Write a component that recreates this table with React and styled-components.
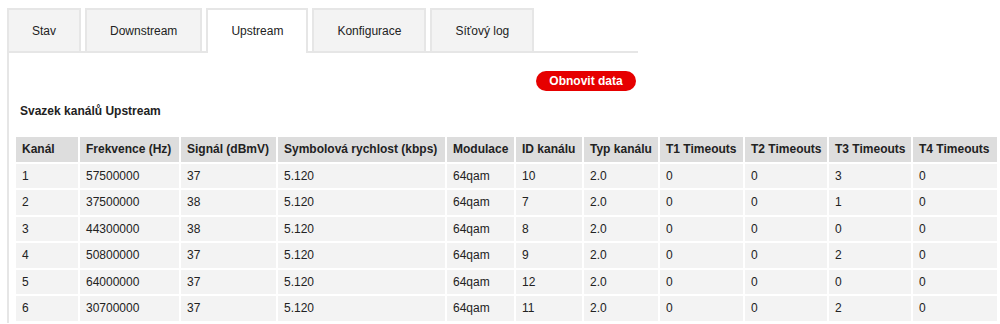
import React from "react";
import styled, { createGlobalStyle } from "styled-components";

const GlobalStyle = createGlobalStyle`
  body {
    margin: 0;
    background: #fff;
    font-family: "Liberation Sans", Arial, sans-serif;
    font-size: 12px;
    color: #222;
    overflow: hidden;
  }
`;

const tabs = ["Stav", "Downstream", "Upstream", "Konfigurace", "Síťový log"];

const columns = [
  { title: "Kanál", width: 62 },
  { title: "Frekvence (Hz)", width: 99 },
  { title: "Signál (dBmV)", width: 95 },
  { title: "Symbolová rychlost (kbps)", width: 167 },
  { title: "Modulace", width: 67 },
  { title: "ID kanálu", width: 66 },
  { title: "Typ kanálu", width: 74 },
  { title: "T1 Timeouts", width: 83 },
  { title: "T2 Timeouts", width: 82 },
  { title: "T3 Timeouts", width: 82 },
  { title: "T4 Timeouts", width: 84 },
];

const rows = [
  ["1", "57500000", "37", "5.120", "64qam", "10", "2.0", "0", "0", "3", "0"],
  ["2", "37500000", "38", "5.120", "64qam", "7", "2.0", "0", "0", "1", "0"],
  ["3", "44300000", "38", "5.120", "64qam", "8", "2.0", "0", "0", "0", "0"],
  ["4", "50800000", "37", "5.120", "64qam", "9", "2.0", "0", "0", "2", "0"],
  ["5", "64000000", "37", "5.120", "64qam", "12", "2.0", "0", "0", "0", "0"],
  ["6", "30700000", "37", "5.120", "64qam", "11", "2.0", "0", "0", "2", "0"],
];

function App() {
  const [active, setActive] = React.useState("Upstream");

  return (
    <Page>
      <GlobalStyle />
      <TabBar>
        {tabs.map((t) => (
          <Tab key={t} $active={t === active} onClick={() => setActive(t)}>
            {t}
          </Tab>
        ))}
      </TabBar>
      <Panel>
        <ButtonRow>
          <RefreshButton>Obnovit data</RefreshButton>
        </ButtonRow>
        <Title>Svazek kanálů Upstream</Title>
        <Table>
          <colgroup>
            {columns.map((c) => (
              <col key={c.title} style={{ width: c.width }} />
            ))}
          </colgroup>
          <thead>
            <tr>
              {columns.map((c) => (
                <Th key={c.title}>{c.title}</Th>
              ))}
            </tr>
          </thead>
          <tbody>
            {rows.map((r) => (
              <tr key={r[0]}>
                {r.map((v, i) => (
                  <Td key={i}>{v}</Td>
                ))}
              </tr>
            ))}
          </tbody>
        </Table>
      </Panel>
    </Page>
  );
}

const Page = styled.div`
  padding: 8px 0 0 7px;
`;

const TabBar = styled.div`
  display: flex;
  align-items: flex-start;
  gap: 4px;
  height: 43px;
`;

const Tab = styled.div`
  position: relative;
  z-index: 1;
  box-sizing: border-box;
  display: flex;
  align-items: center;
  justify-content: center;
  height: ${(p) => (p.$active ? "45px" : "43px")};
  padding: ${(p) => (p.$active ? "0 23px 2px" : "0 23px")};
  background: ${(p) => (p.$active ? "#fff" : "#f3f3f3")};
  border: 2px solid #e6e6e6;
  border-bottom: none;
  font-size: 12px;
  color: #222;
  cursor: pointer;
`;

const Panel = styled.div`
  box-sizing: border-box;
  width: 631px;
  min-height: 271px;
  border-top: 2px solid #e6e6e6;
  border-left: 2px solid #e6e6e6;
`;

const ButtonRow = styled.div`
  display: flex;
  justify-content: flex-end;
  padding: 18px 2px 0 0;
`;

const RefreshButton = styled.button`
  width: 100px;
  height: 20px;
  padding: 0;
  border: none;
  border-radius: 10px;
  background: #e60000;
  color: #fff;
  font-family: "Liberation Sans", Arial, sans-serif;
  font-size: 12px;
  font-weight: bold;
  cursor: pointer;
`;

const Title = styled.div`
  margin-top: 13px;
  padding-left: 11px;
  line-height: 14px;
  font-weight: bold;
  font-size: 12px;
`;

const Table = styled.table`
  table-layout: fixed;
  width: 985px;
  margin: 17px 0 0 5px;
  border-collapse: separate;
  border-spacing: 2px 2px;
  white-space: nowrap;
`;

const Th = styled.th`
  box-sizing: border-box;
  height: 24.5px;
  padding: 0 6px;
  background: #dddddd;
  text-align: left;
  font-weight: bold;
  font-size: 12px;
`;

const Td = styled.td`
  box-sizing: border-box;
  height: 24.5px;
  padding: 0 6px;
  background: #f3f3f3;
  font-size: 12px;
`;

export default App;
